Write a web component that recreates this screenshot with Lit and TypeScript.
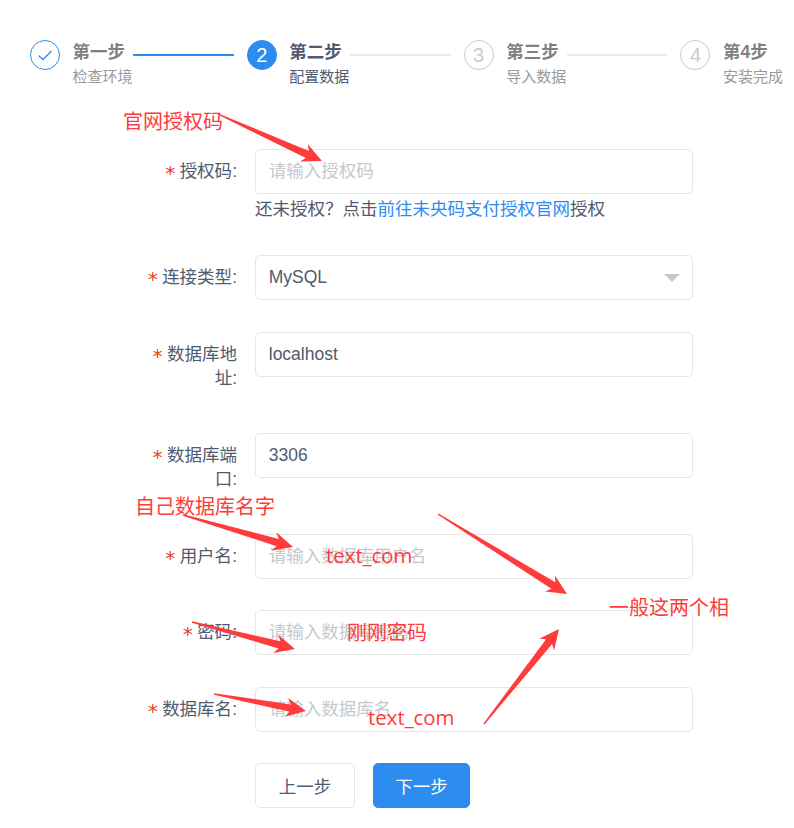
import { LitElement, html, css, svg } from "lit";
import { customElement } from "lit/decorators.js";

type Pt = [number, number];

function arrow(tail: Pt, tip: Pt, head = 20, shaft = 3.8, barb = 9.5): string {
  const dx = tip[0] - tail[0];
  const dy = tip[1] - tail[1];
  const len = Math.hypot(dx, dy);
  const ux = dx / len;
  const uy = dy / len;
  const nx = -uy;
  const ny = ux;
  const at = (back: number, side: number) =>
    `${(tip[0] - ux * back + nx * side).toFixed(1)},${(tip[1] - uy * back + ny * side).toFixed(1)}`;
  return [
    at(len, 0.7),
    at(head * 0.8, shaft),
    at(head, barb),
    `${tip[0]},${tip[1]}`,
    at(head, -barb),
    at(head * 0.8, -shaft),
    at(len, -0.7),
  ].join(" ");
}

const ARROWS: { tail: Pt; tip: Pt; head?: number; shaft?: number; barb?: number }[] = [
  { tail: [218, 114], tip: [322, 161] },
  { tail: [183, 515], tip: [293, 547] },
  { tail: [192, 622], tip: [295, 649] },
  { tail: [214, 694], tip: [306, 711] },
  { tail: [438, 514], tip: [567, 594] },
  { tail: [484, 724], tip: [559, 629] },
];

const NOTES: { text: string; x: number; y: number; latin?: boolean }[] = [
  { text: "官网授权码", x: 123, y: 107 },
  { text: "自己数据库名字", x: 135, y: 492 },
  { text: "text_com", x: 326, y: 540, latin: true },
  { text: "刚刚密码", x: 347, y: 618 },
  { text: "text_com", x: 368, y: 702, latin: true },
  { text: "一般这两个相", x: 609, y: 593 },
];

const STEPS = [
  { title: "第一步", desc: "检查环境", state: "done", num: "1" },
  { title: "第二步", desc: "配置数据", state: "current", num: "2" },
  { title: "第三步", desc: "导入数据", state: "wait", num: "3" },
  { title: "第4步", desc: "安装完成", state: "wait", num: "4" },
];

@customElement("app-root")
export class AppRoot extends LitElement {
  static styles = css`
    :host {
      display: block;
      position: relative;
      height: 828px;
      overflow: hidden;
      background: #fff;
      color: #515a6e;
      font-family: "Liberation Sans", "Noto Sans CJK SC", sans-serif;
      font-size: 17.5px;
    }
    .steps {
      display: flex;
      padding: 40px 10.5px 0 30px;
    }
    .step {
      flex: 1 1 0;
      display: flex;
      min-width: 0;
    }
    .step:last-child {
      flex: 0 0 103px;
    }
    .circle {
      flex: none;
      box-sizing: border-box;
      width: 30px;
      height: 30px;
      border-radius: 50%;
      border: 1.25px solid #ccc;
      color: #ccc;
      font-size: 20px;
      display: flex;
      align-items: center;
      justify-content: center;
      margin-right: 12.5px;
    }
    .done .circle {
      border-color: #2d8cf0;
    }
    .current .circle {
      background: #2d8cf0;
      border-color: #2d8cf0;
      color: #fff;
    }
    .step-body {
      flex: 1;
      min-width: 0;
    }
    .step-head {
      display: flex;
      align-items: center;
      height: 24px;
    }
    .step-title {
      flex: none;
      font-weight: 700;
      line-height: 24px;
      color: #808080;
    }
    .current .step-title {
      color: #515a6e;
    }
    .step-line {
      flex: 1;
      height: 2px;
      margin: 6px 13px 0 8px;
      background: #e8eaec;
    }
    .done .step-line {
      background: #2d8cf0;
    }
    .step-desc {
      font-size: 15px;
      line-height: 20px;
      margin-top: 3px;
      white-space: nowrap;
      color: #999;
    }
    .current .step-desc {
      color: #515a6e;
    }
    .form {
      padding: 62px 101px 0 137px;
    }
    .row {
      display: flex;
      margin-bottom: 31px;
    }
    .label {
      flex: none;
      box-sizing: border-box;
      width: 118px;
      padding: 10px 18px 11px 0;
      line-height: 24.5px;
      text-align: right;
    }
    .star {
      color: #ed4014;
      margin-right: 4.5px;
      font-size: 20px;
      line-height: 1;
      vertical-align: -3px;
      font-family: "DejaVu Sans", sans-serif;
    }
    .field {
      flex: 1;
      min-width: 0;
    }
    .control {
      display: block;
      box-sizing: border-box;
      width: 100%;
      height: 45px;
      padding: 0 12.75px;
      border: 1.25px solid #e6e6e6;
      border-radius: 5px;
      background: transparent;
      color: #515a6e;
      font: inherit;
      outline: none;
    }
    .control::placeholder {
      color: #c5c8ce;
      opacity: 1;
    }
    .select {
      display: flex;
      align-items: center;
      justify-content: space-between;
    }
    .caret {
      width: 0;
      height: 0;
      margin-right: -1px;
      border-left: 8px solid transparent;
      border-right: 8px solid transparent;
      border-top: 8px solid #c5c8ce;
    }
    .hint {
      line-height: 24px;
      margin: 3px 0;
    }
    .hint a {
      color: #2d8cf0;
      text-decoration: none;
    }
    .actions {
      display: flex;
      gap: 18px;
      margin-left: 118px;
    }
    .btn {
      box-sizing: border-box;
      height: 45px;
      border-radius: 5px;
      border: 1.25px solid #e6e6e6;
      background: #fff;
      color: #515a6e;
      font: inherit;
      padding: 0;
    }
    .btn.prev {
      width: 100px;
    }
    .btn.next {
      width: 97px;
      background: #2d8cf0;
      border-color: #2d8cf0;
      color: #fff;
    }
    .marks {
      position: absolute;
      left: 0;
      top: 0;
      width: 794px;
      height: 828px;
      pointer-events: none;
    }
    .marks polygon {
      fill: #ff3b3b;
    }
    .note {
      position: absolute;
      font-size: 20px;
      line-height: 30px;
      white-space: nowrap;
      color: #ff3b3b;
    }
    .note.latin {
      font-family: "Open Sans", sans-serif;
      font-size: 20.4px;
    }
  `;

  private renderStep(s: (typeof STEPS)[number], i: number) {
    return html`<div class="step ${s.state}">
      <div class="circle">
        ${s.state === "done"
          ? html`<svg width="18" height="18" viewBox="0 0 18 18" fill="none" stroke="#2d8cf0" stroke-width="1.3">
              <path d="M2.5 9.5 L7 13.5 L15.5 5"></path>
            </svg>`
          : s.num}
      </div>
      <div class="step-body">
        <div class="step-head">
          <span class="step-title">${s.title}</span>
          ${i < STEPS.length - 1 ? html`<div class="step-line"></div>` : ""}
        </div>
        <div class="step-desc">${s.desc}</div>
      </div>
    </div>`;
  }

  private renderRow(label: string, control: unknown) {
    return html`<div class="row">
      <div class="label"><span class="star">*</span>${label}:</div>
      <div class="field">${control}</div>
    </div>`;
  }

  private input(placeholder: string, value = "") {
    return html`<input class="control" .value=${value} placeholder=${placeholder} />`;
  }

  render() {
    return html`
      <div class="steps">${STEPS.map((s, i) => this.renderStep(s, i))}</div>
      <div class="form">
        ${this.renderRow(
          "授权码",
          html`${this.input("请输入授权码")}
            <div class="hint">还未授权？点击<a href="#">前往未央码支付授权官网</a>授权</div>`
        )}
        ${this.renderRow(
          "连接类型",
          html`<div class="control select"><span>MySQL</span><span class="caret"></span></div>`
        )}
        ${this.renderRow("数据库地址", this.input("", "localhost"))}
        ${this.renderRow("数据库端口", this.input("", "3306"))}
        ${this.renderRow("用户名", this.input("请输入数据库用户名"))}
        ${this.renderRow("密码", this.input("请输入数据库密码"))}
        ${this.renderRow("数据库名", this.input("请输入数据库名"))}
        <div class="actions">
          <button class="btn prev">上一步</button>
          <button class="btn next">下一步</button>
        </div>
      </div>
      <svg class="marks" viewBox="0 0 794 828">
        ${ARROWS.map((a) => svg`<polygon points=${arrow(a.tail, a.tip, a.head, a.shaft, a.barb)}></polygon>`)}
      </svg>
      ${NOTES.map(
        (n) =>
          html`<div class="note ${n.latin ? "latin" : ""}" style="left:${n.x}px;top:${n.y}px">${n.text}</div>`
      )}
    `;
  }
}
